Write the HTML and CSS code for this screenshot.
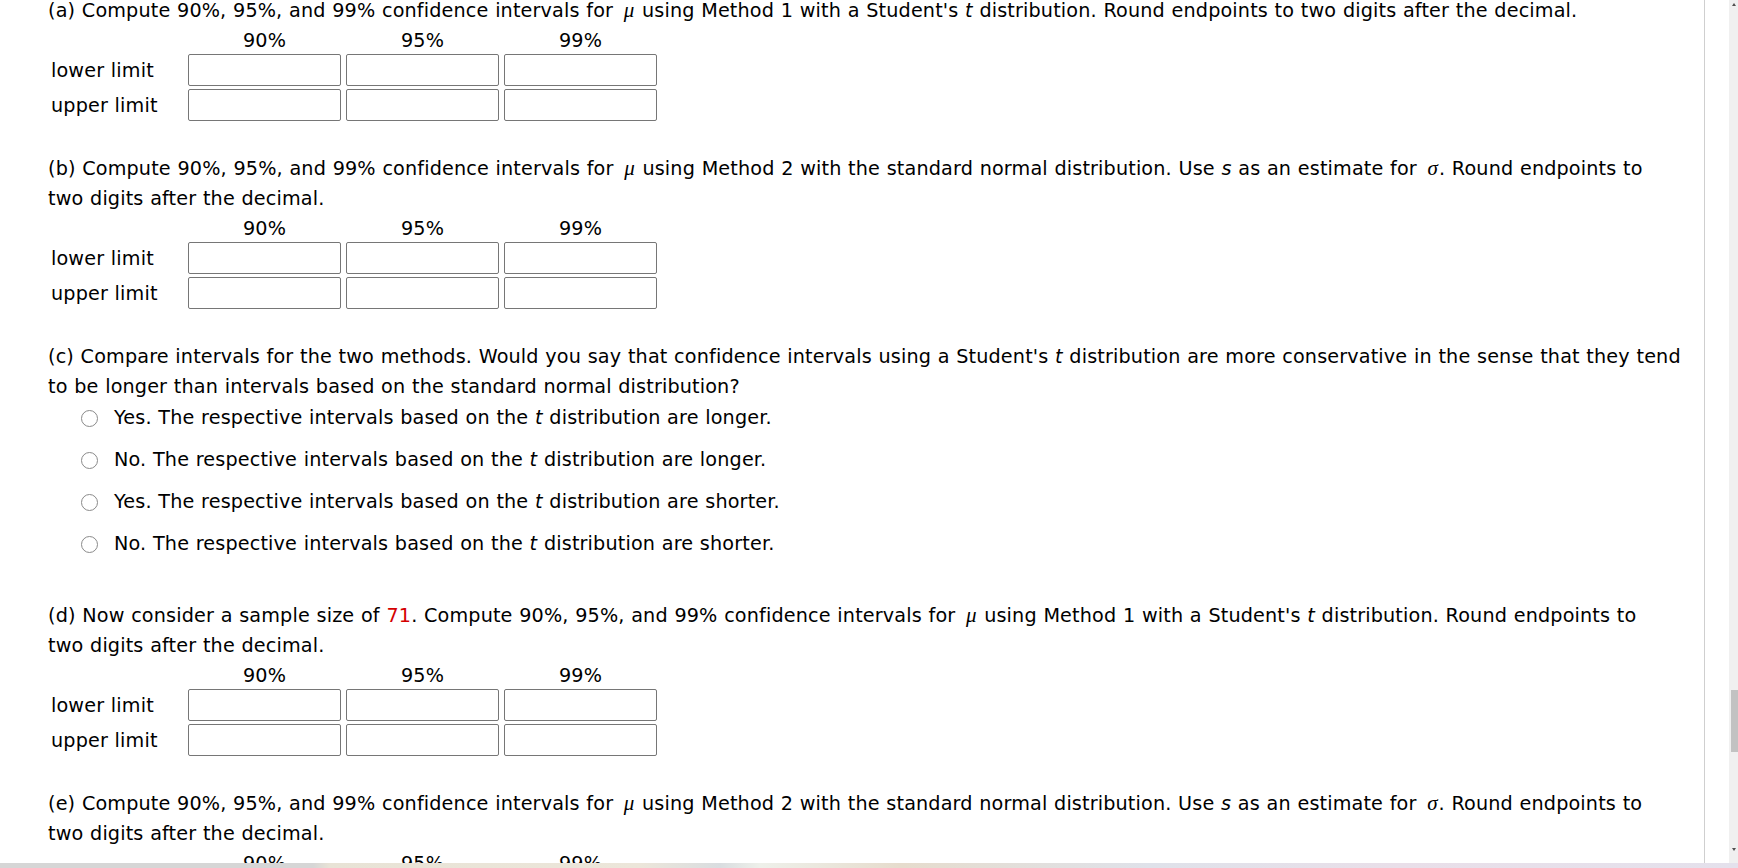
FILE: index.html
```html
<!DOCTYPE html>
<html lang="en">
<head>
<meta charset="utf-8">
<title>Confidence intervals</title>
<link rel="stylesheet" href="styles.css">
</head>
<body>
<div class="screen">
  <div class="viewport">
    <main class="content">
      <div class="inner">
        <section class="part">
          <p class="q">(a) Compute 90%, 95%, and 99% confidence intervals for <i class="m">μ</i> using Method 1 with a Student's <i>t</i> distribution. Round endpoints to two digits after the decimal.</p>
          <div class="hdr"><span></span><span>90%</span><span>95%</span><span>99%</span></div>
          <div class="row"><label>lower limit</label><input type="text"><input type="text"><input type="text"></div>
          <div class="row"><label>upper limit</label><input type="text"><input type="text"><input type="text"></div>
        </section>
        <section class="part">
          <p class="q">(b) Compute 90%, 95%, and 99% confidence intervals for <i class="m">μ</i> using Method 2 with the standard normal distribution. Use <i>s</i> as an estimate for <i class="m">σ</i>. Round endpoints to<br>two digits after the decimal.</p>
          <div class="hdr"><span></span><span>90%</span><span>95%</span><span>99%</span></div>
          <div class="row"><label>lower limit</label><input type="text"><input type="text"><input type="text"></div>
          <div class="row"><label>upper limit</label><input type="text"><input type="text"><input type="text"></div>
        </section>
        <section class="part">
          <p class="q">(c) Compare intervals for the two methods. Would you say that confidence intervals using a Student's <i>t</i> distribution are more conservative in the sense that they tend<br>to be longer than intervals based on the standard normal distribution?</p>
          <div class="opts">
            <label class="opt"><input type="radio" name="c"><span>Yes. The respective intervals based on the <i>t</i> distribution are longer.</span></label>
            <label class="opt"><input type="radio" name="c"><span>No. The respective intervals based on the <i>t</i> distribution are longer.</span></label>
            <label class="opt"><input type="radio" name="c"><span>Yes. The respective intervals based on the <i>t</i> distribution are shorter.</span></label>
            <label class="opt"><input type="radio" name="c"><span>No. The respective intervals based on the <i>t</i> distribution are shorter.</span></label>
          </div>
        </section>
        <section class="part">
          <p class="q">(d) Now consider a sample size of <span class="red">71</span>. Compute 90%, 95%, and 99% confidence intervals for <i class="m">μ</i> using Method 1 with a Student's <i>t</i> distribution. Round endpoints to<br>two digits after the decimal.</p>
          <div class="hdr"><span></span><span>90%</span><span>95%</span><span>99%</span></div>
          <div class="row"><label>lower limit</label><input type="text"><input type="text"><input type="text"></div>
          <div class="row"><label>upper limit</label><input type="text"><input type="text"><input type="text"></div>
        </section>
        <section class="part">
          <p class="q">(e) Compute 90%, 95%, and 99% confidence intervals for <i class="m">μ</i> using Method 2 with the standard normal distribution. Use <i>s</i> as an estimate for <i class="m">σ</i>. Round endpoints to<br>two digits after the decimal.</p>
          <div class="hdr"><span></span><span>90%</span><span>95%</span><span>99%</span></div>
          <div class="row"><label>lower limit</label><input type="text"><input type="text"><input type="text"></div>
          <div class="row"><label>upper limit</label><input type="text"><input type="text"><input type="text"></div>
        </section>
      </div>
    </main>
    <div class="spacer"></div>
    <div class="scrollbar">
      <div class="arrow up"></div>
      <div class="track"><div class="thumb"></div></div>
      <div class="arrow down"></div>
    </div>
  </div>
  <div class="strip"></div>
</div>
</body>
</html>
```

FILE: styles.css
```css
html, body {
  margin: 0;
  padding: 0;
  background: #ffffff;
}

body {
  font-family: "DejaVu Sans", Verdana, sans-serif;
  font-size: 19.2px;
  letter-spacing: 0.15px;
  word-spacing: 0.4px;
  color: #000000;
  height: 868px;
  overflow: hidden;
}

.screen {
  display: flex;
  flex-direction: column;
  height: 868px;
}

.viewport {
  display: flex;
  flex: 1;
  min-height: 0;
}

.content {
  width: 1704px;
  flex: none;
  border-right: 1px solid #cfcfcf;
  overflow: hidden;
}

.inner {
  margin-top: -4px;
  padding-left: 48px;
  width: 1652px;
}

.part {
  margin-bottom: 33px;
}

.q {
  margin: 0;
  line-height: 30px;
  white-space: nowrap;
}

.m {
  font-family: "Liberation Serif", "Times New Roman", serif;
  font-size: 21px;
  line-height: 10px;
  letter-spacing: 0;
  padding: 0 1px 0 4px;
}

.red {
  color: #d40000;
}

.hdr,
.row {
  display: grid;
  grid-template-columns: 135px 153px 153px 153px;
  column-gap: 5px;
}

.hdr {
  height: 28px;
  padding-top: 2px;
  box-sizing: border-box;
  line-height: 26px;
  text-align: center;
}

.row {
  height: 32px;
  align-items: center;
}

.row + .row {
  margin-top: 3px;
}

.row label {
  padding: 2px 0 0 3px;
  line-height: 30px;
}

.row input {
  box-sizing: border-box;
  height: 32px;
  width: 153px;
  margin: 0;
  border: 1px solid #767676;
  border-radius: 2px;
  background: #ffffff;
}

.opts {
  padding-left: 33px;
  padding-top: 1px;
  padding-bottom: 9px;
}

.opt {
  display: flex;
  align-items: center;
  line-height: 30px;
  height: 30px;
}

.opt + .opt {
  margin-top: 12px;
}

.opt input {
  appearance: none;
  -webkit-appearance: none;
  box-sizing: border-box;
  width: 17px;
  height: 17px;
  margin: 0 16px 0 0;
  border: 1px solid #8a8a8a;
  border-radius: 50%;
  background: #ffffff;
  flex: none;
}

.spacer {
  flex: 1;
  background: #ffffff;
}

.scrollbar {
  width: 9px;
  flex: none;
  background: #f0f0f0;
  display: flex;
  flex-direction: column;
  align-items: flex-end;
}

.arrow {
  width: 0;
  height: 0;
  margin-right: 2px;
  border-left: 2px solid transparent;
  border-right: 2px solid transparent;
}

.arrow.up {
  margin-top: 3px;
  border-bottom: 3px solid #505050;
}

.arrow.down {
  margin-bottom: 12px;
  border-top: 3px solid #505050;
}

.track {
  flex: 1;
  width: 100%;
  display: flex;
  justify-content: flex-end;
}

.thumb {
  width: 7px;
  height: 62px;
  margin-top: 684px;
  background: #c2c2c2;
}

.strip {
  height: 5px;
  flex: none;
  background: linear-gradient(90deg, #d6d6d6 0, #d6d6d6 313px, #e8e3d6 330px, #ece6da 640px, #d9dde0 720px, #eef0ea 760px, #e6dccd 900px, #dfe2ea 1150px, #e9dfe9 1400px, #e4e1ec 1738px);
}
```
